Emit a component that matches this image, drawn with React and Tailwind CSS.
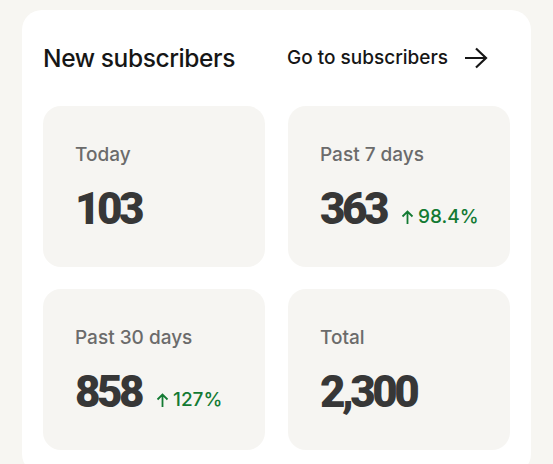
import React from 'react';

const stats = [
  { label: 'Today', value: '103' },
  { label: 'Past 7 days', value: '363', change: '98.4%' },
  { label: 'Past 30 days', value: '858', change: '127%' },
  { label: 'Total', value: '2,300' },
];

function ArrowUp() {
  return (
    <svg width="13" height="15" viewBox="0 0 13 15" fill="none" stroke="currentColor" strokeWidth="1.8">
      <path d="M6.5 14V1.5M1.5 6.5l5-5 5 5" />
    </svg>
  );
}

export default function App() {
  return (
    <div className="min-h-[464px] bg-[#f7f6f2] pt-[10px] px-[22px] font-['Inter',sans-serif] overflow-hidden">
      <div className="bg-white rounded-[20px] w-[509px] px-[21px] pt-[32px] pb-[24px]">
        <div className="flex items-center justify-between h-[32px] pr-[22px]">
          <h2 className="text-[24.5px] font-[550] text-[#161616] tracking-[-0.4px]">New subscribers</h2>
          <a className="flex items-center gap-[16px] text-[19px] font-medium text-[#161616]">
            Go to subscribers
            <svg width="24" height="22" viewBox="0 0 24 22" fill="none" stroke="#161616" strokeWidth="2.2">
              <path d="M1 11h21M12 1.5l10 9.5-10 9.5" />
            </svg>
          </a>
        </div>
        <div className="grid grid-cols-2 gap-x-[23px] gap-y-[22px] mt-[32px]">
          {stats.map((s) => (
            <div key={s.label} className="bg-[#f6f5f2] rounded-[18px] h-[161px] px-[32px] pt-[36px]">
              <div className="text-[19px] leading-[26px] text-[#6b6b6b] font-medium">{s.label}</div>
              <div className="flex items-end gap-[15px] mt-[18px]">
                <span className="font-['Roboto',sans-serif] text-[44px] leading-[46px] font-black text-[#373737] tracking-[-3.5px]">{s.value}</span>
                {s.change && (
                  <span className="flex items-center gap-[4px] text-[19px] leading-[26px] font-medium text-[#137a33] pb-[2px]">
                    <ArrowUp />
                    {s.change}
                  </span>
                )}
              </div>
            </div>
          ))}
        </div>
      </div>
    </div>
  );
}
